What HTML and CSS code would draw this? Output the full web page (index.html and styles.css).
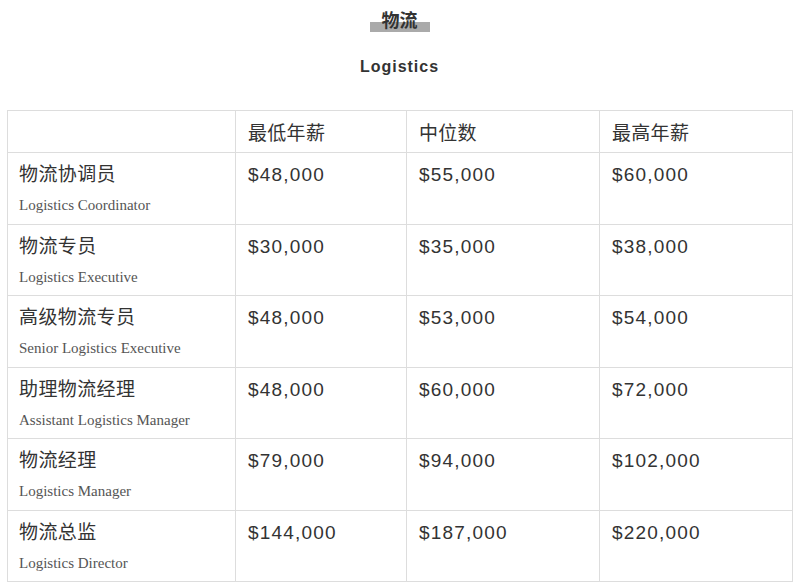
FILE: index.html
```html
<!DOCTYPE html>
<html lang="zh">
<head>
<meta charset="utf-8">
<title>物流</title>
<link rel="stylesheet" href="styles.css">
</head>
<body>
<div class="page">
  <div class="heading"><span class="heading-mark">物流</span></div>
  <div class="subheading">Logistics</div>
  <table class="salary">
    <colgroup>
      <col class="c1"><col class="c2"><col class="c3"><col class="c4">
    </colgroup>
    <thead>
      <tr><th></th><th>最低年薪</th><th>中位数</th><th>最高年薪</th></tr>
    </thead>
    <tbody>
      <tr><td class="role"><div class="cn">物流协调员</div><div class="en">Logistics Coordinator</div></td><td class="num">$48,000</td><td class="num">$55,000</td><td class="num">$60,000</td></tr>
      <tr><td class="role"><div class="cn">物流专员</div><div class="en">Logistics Executive</div></td><td class="num">$30,000</td><td class="num">$35,000</td><td class="num">$38,000</td></tr>
      <tr><td class="role"><div class="cn">高级物流专员</div><div class="en">Senior Logistics Executive</div></td><td class="num">$48,000</td><td class="num">$53,000</td><td class="num">$54,000</td></tr>
      <tr><td class="role"><div class="cn">助理物流经理</div><div class="en">Assistant Logistics Manager</div></td><td class="num">$48,000</td><td class="num">$60,000</td><td class="num">$72,000</td></tr>
      <tr><td class="role"><div class="cn">物流经理</div><div class="en">Logistics Manager</div></td><td class="num">$79,000</td><td class="num">$94,000</td><td class="num">$102,000</td></tr>
      <tr><td class="role"><div class="cn">物流总监</div><div class="en">Logistics Director</div></td><td class="num">$144,000</td><td class="num">$187,000</td><td class="num">$220,000</td></tr>
    </tbody>
  </table>
</div>
</body>
</html>
```
FILE: styles.css
```css
html, body {
  margin: 0;
  padding: 0;
  background: #fff;
}
body {
  font-family: "Liberation Sans", "Noto Sans CJK SC", sans-serif;
  color: #333;
}
.page {
  padding: 10px 8px 0 7px;
}
.heading {
  text-align: center;
  height: 22px;
}
.heading-mark {
  display: inline-block;
  font-size: 18px;
  font-weight: bold;
  line-height: 22px;
  padding: 0 12px;
  color: #333;
  background: linear-gradient(to bottom, transparent 0, transparent 12px, #aaa 12px, #aaa 22px, transparent 22px);
}
.subheading {
  text-align: center;
  font-size: 16px;
  font-weight: bold;
  letter-spacing: 1px;
  line-height: 20px;
  margin-top: 25px;
  color: #333;
}
.salary {
  margin-top: 33px;
  border-collapse: collapse;
  width: 785px;
  table-layout: fixed;
}
.c1 { width: 228px; }
.c2 { width: 171px; }
.c3 { width: 193px; }
.c4 { width: 193px; }
.salary th, .salary td {
  border: 1px solid #ddd;
  text-align: left;
  padding: 0 0 0 12px;
}
.salary th {
  height: 41px;
  font-weight: normal;
  font-size: 19px;
  letter-spacing: 0.3px;
  vertical-align: middle;
  color: #333;
}
.salary td {
  height: 71.5px;
  vertical-align: top;
  padding-top: 10px;
  box-sizing: border-box;
}
.salary td.role {
  padding-left: 11px;
}
.cn {
  font-size: 19px;
  line-height: 24px;
  letter-spacing: 0.4px;
  color: #333;
}
.en {
  font-family: "Liberation Serif", serif;
  font-size: 15px;
  line-height: 18px;
  margin-top: 9px;
  color: #555;
}
.num {
  font-size: 19px;
  line-height: 24px;
  letter-spacing: 1.2px;
  color: #333;
}
```
